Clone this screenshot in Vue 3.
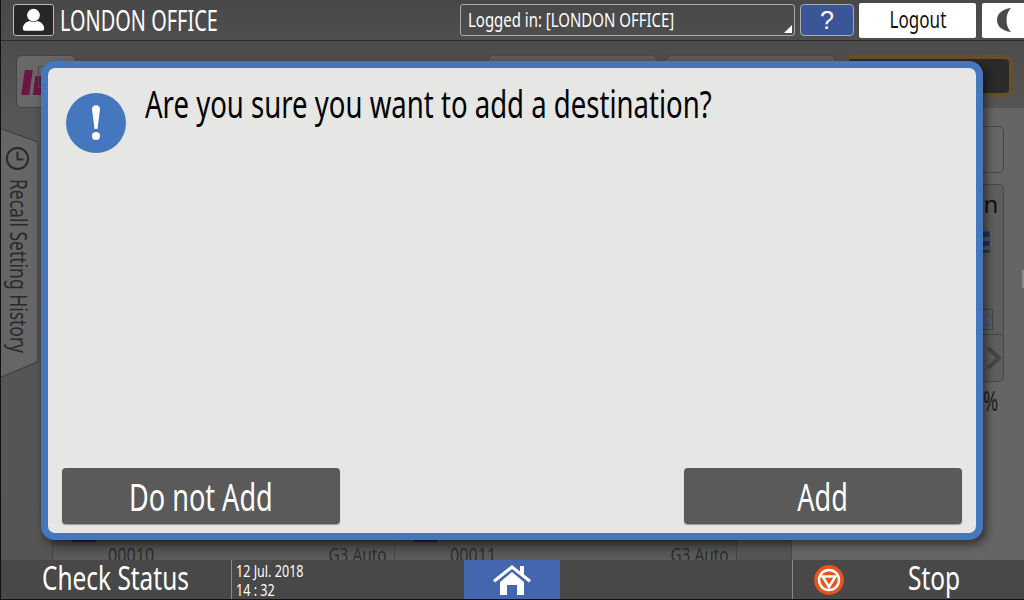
<template>
  <div class="screen">
    <header class="topbar">
      <div class="user-box">
        <svg viewBox="0 0 40 32" width="40" height="32">
          <circle cx="20" cy="11" r="6.500" fill="#fff" />
          <path d="M9 25c0-4 3-7 7-8 2.500 1.500 5.500 1.500 8 0 4 1 7 4 7 8 0 1-1 2-2 2H11c-1 0-2-1-2-2z" fill="#fff" />
        </svg>
      </div>
      <div class="office"><span class="squeeze">LONDON OFFICE</span></div>
      <div class="login-box">
        <span class="squeeze">Logged in: [LONDON OFFICE]</span>
        <i class="corner"></i>
      </div>
      <div class="help">?</div>
      <div class="logout"><span class="squeeze mid">Logout</span></div>
      <div class="moon">
        <svg viewBox="0 0 20 26" width="20" height="26">
          <path d="M16 1C7 2 2 7 2 13s5 11 14 12c-3-3-4.500-7-4.500-12s1.500-9 4.500-12z" fill="#4a4a4a" />
        </svg>
      </div>
    </header>

    <main class="main">
      <div class="tabs">
        <div class="logo-card"><i class="bar"></i><i class="bar short"></i><i class="logo-box"></i></div>
        <div class="tab"></div>
        <div class="tab"></div>
        <div class="tab-start"></div>
      </div>

      <div class="body">
        <div class="history">
          <svg class="history-bg" viewBox="0 0 38 250" width="38" height="250">
            <path d="M-2 0L34 13Q37 14 37 17V232Q37 234 34 235L-2 250z" fill="#666" stroke="#3a3a3a" />
          </svg>
          <svg class="clock-icon" viewBox="0 0 26 26" width="25" height="25">
            <circle cx="13" cy="13" r="11" fill="none" stroke="#2a2a2a" stroke-width="2" />
            <path d="M13 6v8h6" fill="none" stroke="#2a2a2a" stroke-width="2" />
          </svg>
          <span class="history-text">Recall Setting History</span>
        </div>

        <div class="center">
          <div class="rows">
            <div class="row-cell"><i class="mark"></i><span class="squeeze num">00010</span><span class="squeeze kind">G3 Auto</span></div>
            <div class="row-cell"><i class="mark"></i><span class="squeeze num">00011</span><span class="squeeze kind">G3 Auto</span></div>
          </div>
        </div>

        <div class="side">
          <div class="side-top"></div>
          <div class="side-panel">
            <span class="side-label">on</span>
            <i class="grid-mark"></i>
            <i class="num-mark">2</i>
          </div>
          <div class="side-next">
            <svg viewBox="0 0 16 24" width="16" height="24">
              <path d="M2 2l11 10L2 22" fill="none" stroke="#454545" stroke-width="4" />
            </svg>
          </div>
          <span class="percent">%</span>
          <i class="handle"></i>
        </div>
      </div>
    </main>

    <footer class="bottombar">
      <div class="status"><span class="squeeze">Check Status</span></div>
      <div class="clock"><span class="squeeze">12 Jul. 2018</span><span class="squeeze">14 : 32</span></div>
      <div class="home">
        <svg viewBox="0 0 38 32" width="38" height="32">
          <path d="M0 16L19 1l8 6.500V2h4v8.500L38 16l-2 2.500L19 5 2 18.500z" fill="#fff" />
          <path d="M7 18L19 8l12 10v13h-7V21H14v10H7z" fill="#fff" />
        </svg>
      </div>
      <div class="spacer"></div>
      <div class="stop">
        <svg viewBox="0 0 30 30" width="30" height="30">
          <circle cx="15" cy="15" r="15" fill="#e4541c" />
          <circle cx="15" cy="15" r="10" fill="none" stroke="#fff" stroke-width="2.500" />
          <path d="M8.500 11.500h13L15 22z" fill="none" stroke="#fff" stroke-width="2.500" />
        </svg>
        <span class="squeeze">Stop</span>
      </div>
    </footer>

    <section class="dialog">
      <div class="message">
        <svg class="notice" viewBox="0 0 60 60" width="60" height="60">
          <circle cx="30" cy="30" r="30" fill="#4477bd" />
          <path d="M26 16c0-5 8-5 8 0l-2.500 20h-3z" fill="#fff" />
          <circle cx="30" cy="43" r="4" fill="#fff" />
        </svg>
        <p class="squeeze">Are you sure you want to add a destination?</p>
      </div>
      <div class="actions">
        <button><span class="squeeze mid">Do not Add</span></button>
        <button><span class="squeeze mid">Add</span></button>
      </div>
    </section>
  </div>
</template>

<script setup>
</script>

<style>
html, body { margin: 0; background: #000; }
</style>

<style scoped>
.screen {
  position: relative;
  width: 1024px;
  height: 600px;
  overflow: hidden;
  display: flex;
  flex-direction: column;
  box-sizing: border-box;
  border-left: 1px solid #111;
  border-bottom: 1px solid #111;
  font-family: "Noto Sans", sans-serif;
  background: #555;
}
.squeeze {
  display: inline-block;
  white-space: nowrap;
  transform: scaleX(0.81);
  transform-origin: left center;
}
.squeeze.mid { transform-origin: center; }

.topbar {
  height: 41px;
  flex: none;
  display: flex;
  align-items: center;
  padding: 0 0 0 12px;
  box-sizing: border-box;
  background: linear-gradient(#484848, #4e4e4e);
  border-bottom: 1px solid #2e2e2e;
  color: #fff;
}
.user-box {
  width: 41px;
  height: 32px;
  background: #262827;
  border: 1px solid #bbb;
  border-radius: 3px;
  box-sizing: border-box;
  display: flex;
  align-items: center;
  justify-content: center;
}
.office {
  margin-left: 6px;
  font-size: 29px;
  line-height: 34px;
  flex: 1;
}
.office .squeeze { transform: scaleX(0.687); }
.login-box {
  position: relative;
  width: 335px;
  height: 32px;
  box-sizing: border-box;
  border: 1px solid #aaa;
  border-radius: 3px;
  font-size: 20px;
  line-height: 30px;
  padding-left: 7px;
}
.login-box .squeeze { transform: scaleX(0.748); }
.corner {
  position: absolute;
  right: 2px;
  bottom: 2px;
  border-style: solid;
  border-width: 0 0 8px 8px;
  border-color: transparent transparent #fff transparent;
}
.help {
  width: 54px;
  height: 32px;
  margin-left: 5px;
  box-sizing: border-box;
  background: #3a5697;
  border: 1px solid #aaa;
  border-radius: 4px;
  text-align: center;
  line-height: 30px;
  font-size: 25px;
  font-family: "Liberation Sans", sans-serif;
}
.logout {
  width: 117px;
  height: 35px;
  margin-left: 5px;
  background: #fff;
  border-radius: 2px;
  color: #111;
  font-size: 24px;
  line-height: 32px;
  text-align: center;
}
.logout .squeeze { transform: scaleX(0.71); }
.moon {
  width: 42px;
  height: 35px;
  margin-left: 6px;
  background: #fff;
  border-radius: 2px 0 0 2px;
  display: flex;
  align-items: center;
  padding-left: 13px;
  box-sizing: border-box;
}

.main {
  flex: 1;
  display: flex;
  flex-direction: column;
  background: linear-gradient(#4c4c4c, #565656 14%, #555);
}
.tabs {
  height: 67px;
  flex: none;
  display: flex;
  align-items: flex-start;
  padding: 14px 0 0 15px;
  box-sizing: border-box;
}
.logo-card {
  position: relative;
  width: 60px;
  height: 53px;
  background: #686868;
  border: 1px solid #444;
  border-radius: 6px;
  display: flex;
  gap: 3px;
  padding: 14px 0 0 6px;
  box-sizing: border-box;
}
.bar {
  width: 8px;
  height: 25px;
  background: #6b1545;
  transform: skewX(-8deg);
}
.bar.short {
  height: 19px;
  margin-top: 6px;
}
.logo-box {
  position: absolute;
  left: 21px;
  top: 10px;
  width: 20px;
  height: 20px;
  border: 1px solid #4c4c4c;
}
.tab {
  width: 169px;
  height: 42px;
  margin-right: 9px;
  background: #5c5c5c;
  border: 1px solid #484848;
  border-radius: 5px;
  box-sizing: border-box;
}
.logo-card + .tab { margin-left: 412px; }
.tab-start {
  width: 169px;
  height: 42px;
  background: #2a2a2a;
  border: 4px solid #66502a;
  border-radius: 8px;
  box-sizing: border-box;
}

.body {
  flex: 1;
  display: flex;
}
.history {
  position: relative;
  width: 51px;
  height: 250px;
  margin-top: 20px;
  flex: none;
  display: flex;
  flex-direction: column;
  align-items: flex-start;
  padding-left: 4px;
  box-sizing: border-box;
  color: #2a2a2a;
}
.history-bg {
  position: absolute;
  left: 0;
  top: 0;
  overflow: visible;
}
.clock-icon {
  position: relative;
  flex: none;
  margin-top: 18px;
}
.history-text {
  position: relative;
  flex: none;
  margin: 8px 0 0 1px;
  writing-mode: vertical-rl;
  font-size: 23px;
  line-height: 26px;
  white-space: nowrap;
  transform: scaleY(0.76);
  transform-origin: top;
}
.center {
  width: 739px;
  flex: none;
  display: flex;
  flex-direction: column;
  justify-content: flex-end;
}
.rows {
  height: 20px;
  width: 686px;
  display: flex;
  overflow: hidden;
  background: linear-gradient(#4a4a4a, #5c5c5c);
  border-left: 1px solid #444;
  box-sizing: border-box;
}
.row-cell {
  position: relative;
  width: 342px;
  flex: none;
  border-right: 1px solid #444;
  box-sizing: border-box;
  font-size: 20px;
  line-height: 26px;
  color: #2c2c2c;
}
.num {
  position: absolute;
  left: 55px;
  top: 2px;
}
.kind {
  position: absolute;
  right: 7px;
  top: 2px;
  transform: scaleX(0.77);
  transform-origin: right center;
}
.mark {
  position: absolute;
  left: 19px;
  top: 0;
  width: 24px;
  height: 2px;
  background: #2c1c44;
}
.side {
  position: relative;
  flex: 1;
  min-width: 0;
  display: flex;
  flex-direction: column;
  padding: 18px 20px 0 185px;
  box-sizing: border-box;
  background: #656565;
  border-left: 1px solid #484848;
  color: #222;
}
.side-top {
  height: 47px;
  border: 1px solid #484848;
  border-radius: 5px;
  box-sizing: border-box;
}
.side-panel {
  position: relative;
  margin-top: 11px;
  height: 151px;
  background: #5e5e5e;
  border: 1px solid #484848;
  border-radius: 5px 5px 0 0;
  box-sizing: border-box;
}
.side-label {
  position: absolute;
  left: -9px;
  top: 3px;
  font-size: 24px;
  line-height: 32px;
  color: #111;
}
.grid-mark {
  position: absolute;
  left: -2px;
  top: 46px;
  width: 12px;
  height: 20px;
  border: 1px solid #444;
  background: repeating-linear-gradient(#1e3263 0 5px, #5c5c5c 5px 9px);
}
.num-mark {
  position: absolute;
  left: -2px;
  top: 124px;
  width: 15px;
  height: 19px;
  border: 1px solid #444;
  color: #3a5697;
  font-size: 14px;
  font-style: normal;
  line-height: 19px;
  text-align: right;
}
.side-next {
  height: 47px;
  background: #5e5e5e;
  border: 1px solid #484848;
  border-top: 0;
  border-radius: 0 0 5px 5px;
  box-sizing: border-box;
  display: flex;
  justify-content: flex-end;
  align-items: center;
  padding: 0 1px 0 0;
}
.percent {
  margin-top: 3px;
  align-self: flex-end;
  padding-right: 9px;
  font-size: 27px;
  line-height: 32px;
  transform: scaleX(0.68);
  transform-origin: right center;
}
.handle {
  position: absolute;
  right: 0;
  top: 162px;
  width: 2px;
  height: 18px;
  background: #8a8a8a;
}

.bottombar {
  height: 39px;
  flex: none;
  display: flex;
  background: #484848;
  color: #fff;
}
.status {
  width: 231px;
  flex: none;
  padding-left: 41px;
  box-sizing: border-box;
  font-size: 32px;
  line-height: 36px;
  border-right: 1px solid #8a8a8a;
}
.status .squeeze { transform: scaleX(0.763); }
.clock {
  width: 232px;
  flex: none;
  display: flex;
  flex-direction: column;
  align-items: flex-start;
  padding: 1px 0 0 4px;
  box-sizing: border-box;
  font-size: 17px;
  line-height: 19px;
}
.clock .squeeze { transform: scaleX(0.74); }
.home {
  width: 96px;
  flex: none;
  background: #4366ae;
  display: flex;
  align-items: center;
  justify-content: center;
}
.spacer {
  width: 233px;
  flex: none;
  border-right: 1px solid #8a8a8a;
  box-sizing: border-box;
}
.stop {
  flex: 1;
  display: flex;
  align-items: center;
  padding-left: 21px;
  font-size: 32px;
}
.stop span {
  margin: -4px 0 0 64px;
  transform: scaleX(0.765);
}

.dialog {
  position: absolute;
  left: 40px;
  top: 61px;
  width: 942px;
  height: 479px;
  box-sizing: border-box;
  display: flex;
  flex-direction: column;
  justify-content: space-between;
  padding: 13px 14px 9px;
  background: #e6e6e4;
  border: 7px solid #4477bd;
  border-radius: 14px;
  box-shadow: 3px 4px 10px rgba(0, 0, 0, 0.55);
}
.message {
  display: flex;
  align-items: flex-start;
}
.notice {
  flex: none;
  margin: 12px 19px 0 4px;
}
.message p {
  margin: -1px 0 0;
  font-size: 38px;
  line-height: 46px;
  color: #000;
  transform: scaleX(0.725);
}
.actions {
  display: flex;
  justify-content: space-between;
}
.actions button {
  width: 278px;
  height: 56px;
  padding: 0;
  border: 0;
  border-radius: 4px;
  background: #5a5a5a;
  color: #fff;
  font-family: inherit;
  font-size: 38px;
  line-height: 54px;
  box-shadow: 0 1px 1px #999;
}
.actions .squeeze { transform: scaleX(0.713); }
</style>
